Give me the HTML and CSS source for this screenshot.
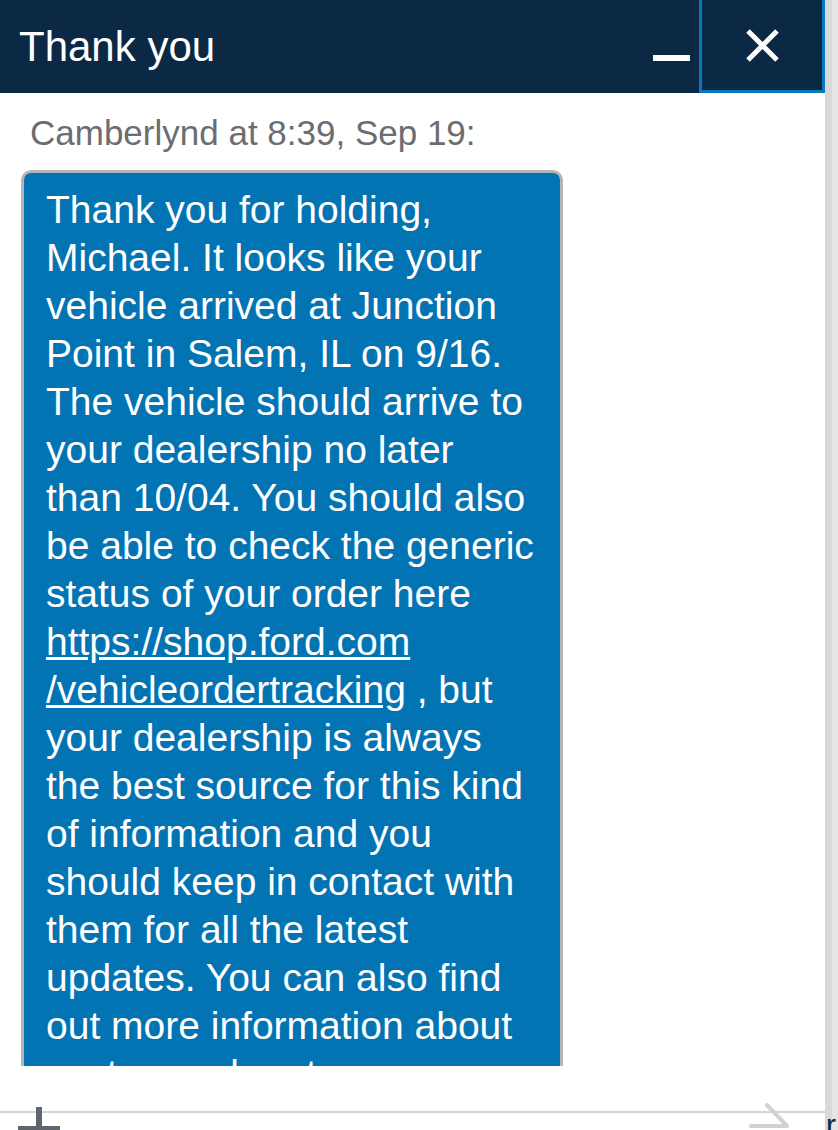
FILE: index.html
```html
<!DOCTYPE html>
<html lang="en">
<head>
<meta charset="utf-8">
<title>Thank you</title>
<link rel="stylesheet" href="styles.css">
</head>
<body>
<div class="app">
  <div class="window">
    <header class="titlebar">
      <div class="title">Thank you</div>
      <div class="min-btn"><span class="min-bar"></span></div>
      <div class="close-btn">
        <svg width="37" height="37" viewBox="0 0 37 37"><path d="M4 4 L33 33 M33 4 L4 33" stroke="#ffffff" stroke-width="5" fill="none"/></svg>
      </div>
    </header>
    <main class="messages">
      <p class="sender">Camberlynd at 8:39, Sep 19:</p>
      <div class="bubble">Thank you for holding, Michael. It looks like your vehicle arrived at Junction Point in Salem, IL on 9/16. The vehicle should arrive to your dealership no later than 10/04. You should also be able to check the generic status of your order here <a class="link" href="#">https://shop.ford.com<wbr>/vehicleordertracking</a> , but your dealership is always the best source for this kind of information and you should keep in contact with them for all the latest updates. You can also find out more information about custom order at your dealership.</div>
    </main>
    <div class="spacer"></div>
    <footer class="composer">
      <svg class="attach" width="42" height="23" viewBox="0 0 42 23"><rect x="18" y="0" width="6" height="23" fill="#5f6670"/><rect x="0" y="19" width="42" height="4" fill="#5f6670"/></svg>
      <svg class="send" width="47" height="27" viewBox="0 0 47 27"><path d="M22 2 L42 23 M6 23 L42 23" stroke="#d2d2d2" stroke-width="4" stroke-linecap="round" fill="none"/></svg>
    </footer>
  </div>
  <div class="scrollbar"><span class="edge-glyph">r</span></div>
</div>
</body>
</html>
```
FILE: styles.css
```css
html, body {
  margin: 0;
  padding: 0;
  background: #ffffff;
}
body {
  width: 838px;
  height: 1130px;
  overflow: hidden;
  font-family: "Liberation Sans", Arial, sans-serif;
}
.app {
  display: flex;
  width: 838px;
  height: 1130px;
}
.window {
  width: 825px;
  display: flex;
  flex-direction: column;
}
.titlebar {
  height: 93px;
  background: #0b2945;
  display: flex;
  flex: none;
}
.title {
  flex: 1;
  color: #ffffff;
  font-size: 42px;
  line-height: 48px;
  padding: 23px 0 0 19px;
}
.min-btn {
  width: 46px;
  padding-top: 55px;
  box-sizing: border-box;
}
.min-bar {
  display: block;
  width: 37px;
  height: 6px;
  background: #ffffff;
}
.close-btn {
  width: 126px;
  height: 93px;
  box-sizing: border-box;
  border: 3px solid #0a78be;
  border-top: none;
  display: flex;
  align-items: center;
  justify-content: center;
}
.messages {
  height: 973px;
  overflow: hidden;
  flex: none;
}
.sender {
  margin: 0;
  padding: 20px 0 0 30px;
  font-size: 35px;
  line-height: 40px;
  color: #6b6d70;
}
.bubble {
  margin: 17px 0 0 21px;
  width: 542px;
  box-sizing: border-box;
  background: #0274b3;
  border: 3px solid #b5b5b5;
  border-radius: 10px;
  padding: 13px 23px 20px 22px;
  color: #ffffff;
  font-size: 39px;
  line-height: 48px;
}
.link {
  color: #ffffff;
  text-decoration: underline;
}
.spacer {
  height: 45px;
  flex: none;
}
.composer {
  flex: 1;
  border-top: 2px solid #d4d4d4;
  display: flex;
  align-items: flex-start;
}
.attach {
  margin: -6px 0 0 18px;
  flex: none;
}
.send {
  margin: -10px 0 0 685px;
  flex: none;
}
.scrollbar {
  width: 13px;
  background: linear-gradient(to right, #d9d9d9 0, #d9d9d9 7px, #e5e5e5 7px);
  display: flex;
  flex-direction: column;
  justify-content: flex-end;
  overflow: hidden;
}
.edge-glyph {
  color: #0b2945;
  font-size: 30px;
  line-height: 22px;
  margin-left: 1px;
  margin-bottom: -6px;
}
```
